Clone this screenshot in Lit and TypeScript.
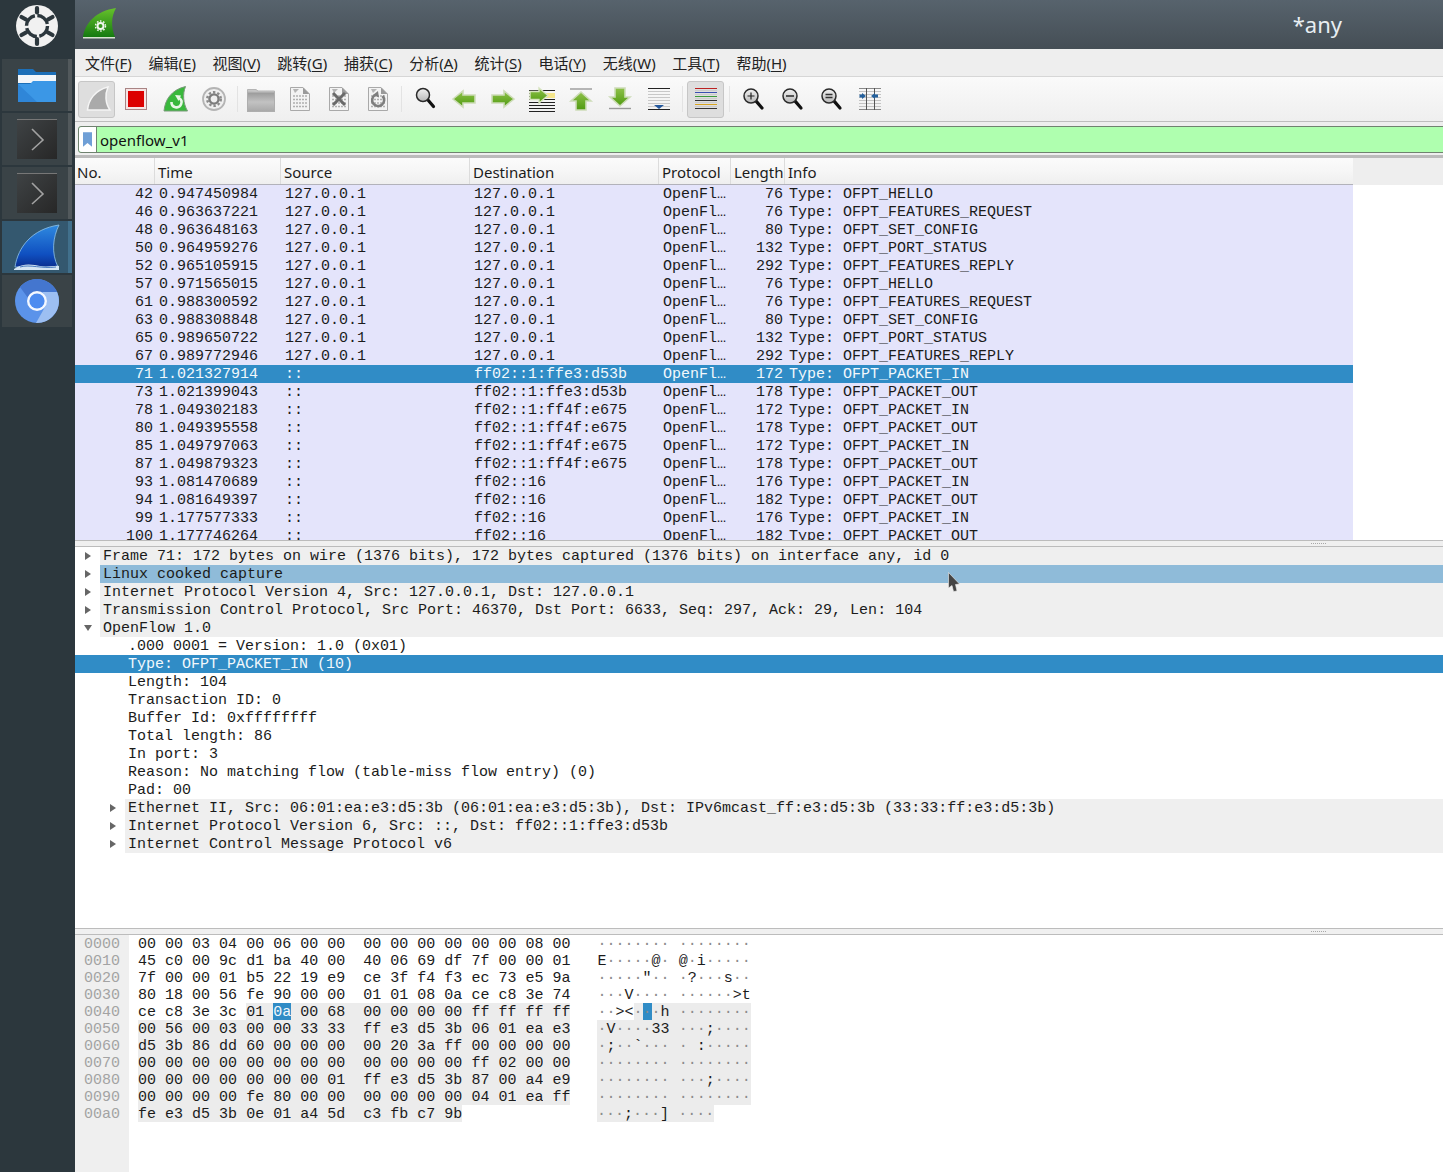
import { LitElement, html, svg, css } from "lit";
import { customElement } from "lit/decorators.js";

// --- data ---

const menus = [
  ["文件(", "F", ")"], ["编辑(", "E", ")"], ["视图(", "V", ")"], ["跳转(", "G", ")"],
  ["捕获(", "C", ")"], ["分析(", "A", ")"], ["统计(", "S", ")"], ["电话(", "Y", ")"],
  ["无线(", "W", ")"], ["工具(", "T", ")"], ["帮助(", "H", ")"],
];

const columns = ["No.", "Time", "Source", "Destination", "Protocol", "Length", "Info"];

const packets = [
  [42, "0.947450984", "127.0.0.1", "127.0.0.1", 76, "OFPT_HELLO"],
  [46, "0.963637221", "127.0.0.1", "127.0.0.1", 76, "OFPT_FEATURES_REQUEST"],
  [48, "0.963648163", "127.0.0.1", "127.0.0.1", 80, "OFPT_SET_CONFIG"],
  [50, "0.964959276", "127.0.0.1", "127.0.0.1", 132, "OFPT_PORT_STATUS"],
  [52, "0.965105915", "127.0.0.1", "127.0.0.1", 292, "OFPT_FEATURES_REPLY"],
  [57, "0.971565015", "127.0.0.1", "127.0.0.1", 76, "OFPT_HELLO"],
  [61, "0.988300592", "127.0.0.1", "127.0.0.1", 76, "OFPT_FEATURES_REQUEST"],
  [63, "0.988308848", "127.0.0.1", "127.0.0.1", 80, "OFPT_SET_CONFIG"],
  [65, "0.989650722", "127.0.0.1", "127.0.0.1", 132, "OFPT_PORT_STATUS"],
  [67, "0.989772946", "127.0.0.1", "127.0.0.1", 292, "OFPT_FEATURES_REPLY"],
  [71, "1.021327914", "::", "ff02::1:ffe3:d53b", 172, "OFPT_PACKET_IN"],
  [73, "1.021399043", "::", "ff02::1:ffe3:d53b", 178, "OFPT_PACKET_OUT"],
  [78, "1.049302183", "::", "ff02::1:ff4f:e675", 172, "OFPT_PACKET_IN"],
  [80, "1.049395558", "::", "ff02::1:ff4f:e675", 178, "OFPT_PACKET_OUT"],
  [85, "1.049797063", "::", "ff02::1:ff4f:e675", 172, "OFPT_PACKET_IN"],
  [87, "1.049879323", "::", "ff02::1:ff4f:e675", 178, "OFPT_PACKET_OUT"],
  [93, "1.081470689", "::", "ff02::16", 176, "OFPT_PACKET_IN"],
  [94, "1.081649397", "::", "ff02::16", 182, "OFPT_PACKET_OUT"],
  [99, "1.177577333", "::", "ff02::16", 176, "OFPT_PACKET_IN"],
  [100, "1.177746264", "::", "ff02::16", 182, "OFPT_PACKET_OUT"],
];

// level, expander (""/"r"/"d"), state, text
const tree: [number, string, string, string][] = [
  [0, "r", "", "Frame 71: 172 bytes on wire (1376 bits), 172 bytes captured (1376 bits) on interface any, id 0"],
  [0, "r", "related", "Linux cooked capture"],
  [0, "r", "", "Internet Protocol Version 4, Src: 127.0.0.1, Dst: 127.0.0.1"],
  [0, "r", "", "Transmission Control Protocol, Src Port: 46370, Dst Port: 6633, Seq: 297, Ack: 29, Len: 104"],
  [0, "d", "", "OpenFlow 1.0"],
  [1, "", "", ".000 0001 = Version: 1.0 (0x01)"],
  [1, "", "selected", "Type: OFPT_PACKET_IN (10)"],
  [1, "", "", "Length: 104"],
  [1, "", "", "Transaction ID: 0"],
  [1, "", "", "Buffer Id: 0xffffffff"],
  [1, "", "", "Total length: 86"],
  [1, "", "", "In port: 3"],
  [1, "", "", "Reason: No matching flow (table-miss flow entry) (0)"],
  [1, "", "", "Pad: 00"],
  [1, "r", "", "Ethernet II, Src: 06:01:ea:e3:d5:3b (06:01:ea:e3:d5:3b), Dst: IPv6mcast_ff:e3:d5:3b (33:33:ff:e3:d5:3b)"],
  [1, "r", "", "Internet Protocol Version 6, Src: ::, Dst: ff02::1:ffe3:d53b"],
  [1, "r", "", "Internet Control Message Protocol v6"],
];

const dump = [
  "00 00 03 04 00 06 00 00 00 00 00 00 00 00 08 00",
  "45 c0 00 9c d1 ba 40 00 40 06 69 df 7f 00 00 01",
  "7f 00 00 01 b5 22 19 e9 ce 3f f4 f3 ec 73 e5 9a",
  "80 18 00 56 fe 90 00 00 01 01 08 0a ce c8 3e 74",
  "ce c8 3e 3c 01 0a 00 68 00 00 00 00 ff ff ff ff",
  "00 56 00 03 00 00 33 33 ff e3 d5 3b 06 01 ea e3",
  "d5 3b 86 dd 60 00 00 00 00 20 3a ff 00 00 00 00",
  "00 00 00 00 00 00 00 00 00 00 00 00 ff 02 00 00",
  "00 00 00 00 00 00 00 01 ff e3 d5 3b 87 00 a4 e9",
  "00 00 00 00 fe 80 00 00 00 00 00 00 04 01 ea ff",
  "fe e3 d5 3b 0e 01 a4 5d c3 fb c7 9b",
].map((r) => r.split(" "));

const FIELD_START = 0x44;
const SELECTED = 0x45;

// --- icons ---

const ico = (body: unknown) => html`<svg class="ico" viewBox="0 0 32 32" width="32" height="32">${body}</svg>`;

const finPath = "M6.5 27 C7.5 17 14 7 27 4 C24 11 24 20 29 27 Z";

const lens = (inner: unknown, x = 14, y = 13, r = 7) => html`
  <svg class="ico" viewBox="0 0 32 32" width="32" height="32">
    <defs><linearGradient id="lg" x1="0" y1="0" x2="0" y2="1"><stop offset="0" stop-color="#f2f2f2" /><stop offset="1" stop-color="#b8b8b8" /></linearGradient></defs>
    <line x1=${x + r * 0.7} y1=${y + r * 0.7} x2=${x + r + 4} y2=${y + r + 5} stroke="#111" stroke-width="3.2" stroke-linecap="round" />
    <circle cx=${x} cy=${y} r=${r} fill="url(#lg)" stroke="#2a2a2a" stroke-width="1.5" />
    ${inner}
  </svg>`;

const docBody = svg`
  <path d="M6.5 4.5 H19 L25.5 11 V27.5 H6.5 Z" fill="#f3f3f3" stroke="#a9a9a9" />
  <path d="M19 4.5 V11 H25.5 Z" fill="#9a9a9a" />
  <path d="M9 6 L15 6 L11 10 Z" fill="#b5b5b5" />
  <g stroke="#b0b0b0" stroke-width="1.4" stroke-dasharray="2 1">
    <line x1="9" y1="13" x2="23" y2="13" /><line x1="9" y1="16.5" x2="23" y2="16.5" />
    <line x1="9" y1="20" x2="23" y2="20" /><line x1="9" y1="23.5" x2="23" y2="23.5" />
  </g>`;

const leftArrow = "M5 16 L15 8 V12 H27 V20 H15 V24 Z";
const rightArrow = "M27 16 L17 8 V12 H5 V20 H17 V24 Z";
const upArrow = "M16 9 L26 18 H21 V27 H11 V18 H6 Z";
const greenFill = svg`<defs><linearGradient id="ag" x1="0" y1="0" x2="0" y2="1"><stop offset="0" stop-color="#8fc24a" /><stop offset="1" stop-color="#4f9a10" /></linearGradient></defs>`;

const rules = (ys: number[], color: string, x1 = 3, x2 = 29) =>
  ys.map((y) => svg`<line x1=${x1} y1=${y} x2=${x2} y2=${y} stroke=${color} stroke-width="1" />`);

const icons = {
  start: ico(svg`<path d=${finPath} fill="#aaa" stroke="#f5f5f5" stroke-width="1.5" />`),
  stop: ico(svg`<rect x="5.5" y="5.5" width="21" height="21" fill="#f6e4e4" stroke="#a98484" /><rect x="8" y="8" width="16" height="16" fill="#dc0000" />`),
  restart: ico(svg`
    <path d="M5 28 C6 17 12 7 26.5 3.5 C23.5 11 24 20 28.5 28 Z" fill="#39b83c" stroke="#7a9a7a" stroke-width="1" />
    <path d="M12.5 19 A5 5 0 1 0 20 15" fill="none" stroke="#e9f7e6" stroke-width="2.6" />
    <path d="M16 12 L22 12.5 L19.5 18 Z" fill="#e9f7e6" />`),
  options: ico(svg`
    <circle cx="16" cy="16" r="11" fill="#efefef" stroke="#b4b4b4" stroke-width="1.8" />
    <circle cx="16" cy="16" r="6.8" fill="none" stroke="#8a8a8a" stroke-width="2.4" stroke-dasharray="2.4 2" />
    <circle cx="16" cy="16" r="4.6" fill="none" stroke="#7c7c7c" stroke-width="2.4" />`),
  open: ico(svg`
    <defs><linearGradient id="fg" x1="0" y1="0" x2="0" y2="1"><stop offset="0" stop-color="#9a9a9a" /><stop offset=".5" stop-color="#c2c2c2" /><stop offset="1" stop-color="#a8a8a8" /></linearGradient></defs>
    <path d="M2.5 9 V6.5 H11 L13 8 H29.5 V10 Z" fill="#c6c6c6" stroke="#b4b4b4" />
    <rect x="2.5" y="9.5" width="27" height="19" fill="url(#fg)" stroke="#aeaeae" />`),
  save: ico(docBody),
  close: ico(svg`${docBody}<path d="M10 10 L22 22 M22 10 L10 22" stroke="#6a6a6a" stroke-width="3" />`),
  reload: ico(svg`${docBody}<path d="M13 12 A6 6 0 1 0 20.5 13" fill="none" stroke="#7e7e7e" stroke-width="2.6" /><path d="M16 8 L11 12 L17 14.5 Z" fill="#7e7e7e" />`),
  find: lens("", 14, 12, 6.5),
  prev: ico(svg`${greenFill}<path d=${leftArrow} fill="url(#ag)" stroke="#cddcb8" stroke-width="1.6" />`),
  next: ico(svg`${greenFill}<path d=${rightArrow} fill="url(#ag)" stroke="#cddcb8" stroke-width="1.6" />`),
  go: ico(svg`${greenFill}
    ${rules([7.5, 10.5, 13.5, 16.5, 19.5, 22.5, 25.5, 28.5], "#222")}
    <rect x="20" y="10" width="9" height="5" fill="#f5e68c" />
    <path d="M22 12.5 L13 5 V8.5 H4 V16.5 H13 V20 Z" fill="url(#ag)" stroke="#d7e4c0" stroke-width="1.4" />`),
  first: ico(svg`${greenFill}
    <line x1="5" y1="6" x2="27" y2="6" stroke="#999" stroke-width="1.4" />
    <path d=${upArrow} fill="url(#ag)" stroke="#cddcb8" stroke-width="1.6" />`),
  last: ico(svg`${greenFill}
    <line x1="5" y1="25.5" x2="27" y2="25.5" stroke="#999" stroke-width="1.4" />
    <path d="M16 23 L26 14 H21 V5 H11 V14 H6 Z" fill="url(#ag)" stroke="#cddcb8" stroke-width="1.6" />`),
  autoscroll: ico(svg`
    ${rules([8.5, 11.5, 14.5, 17.5, 20.5, 23.5], "#c8c8c8", 5, 27)}
    ${rules([5.5, 26.5], "#222", 5, 27)}
    <path d="M11 22 H21 L16 26 Z" fill="#24589c" />`),
  colorize: ico(svg`
    ${rules([7.5, 11.5, 15.5, 19.5, 23.5], "#ccc", 5, 27)}
    ${rules([5.5], "#b22", 5, 27)}${rules([9.5], "#3a50b0", 5, 27)}${rules([13.5], "#3c9a3c", 5, 27)}
    ${rules([17.5], "#333", 5, 27)}${rules([21.5], "#d9a520", 5, 27)}${rules([25.5], "#333", 5, 27)}`),
  zoomIn: lens(svg`<path d="M10.5 13 H17.5 M14 9.5 V16.5" stroke="#222" stroke-width="1.2" />`),
  zoomOut: lens(svg`<path d="M10 13 H18" stroke="#333" stroke-width="1.6" />`),
  zoomReset: lens(svg`<path d="M10.5 11.5 H17.5 M10.5 14.5 H17.5" stroke="#333" stroke-width="1.4" />`),
  resize: ico(svg`
    ${rules([8.5, 11.5, 14.5, 17.5, 20.5, 23.5], "#c4c4c4", 5, 27)}
    ${rules([5.5, 26.5], "#888", 5, 27)}
    <path d="M12.5 5 V27 M20.5 5 V27" stroke="#555" />
    <path d="M8 10 L12 13 L8 16 Z M17 13 L21 10 V16 Z" fill="#24609c" />
    <rect x="5.5" y="11.5" width="3" height="3" fill="#24609c" /><rect x="21" y="11.5" width="3" height="3" fill="#24609c" />`),
};

const toolbar: (string | null)[] = [
  "start", "stop", "restart", "options", null, "open", "save", "close", "reload", null,
  "find", "prev", "next", "go", "first", "last", "autoscroll", null, "colorize", null,
  "zoomIn", "zoomOut", "zoomReset", "resize",
];
const pressed = new Set(["start", "colorize"]);

@customElement("app-root")
export class AppRoot extends LitElement {
  // --- render parts ---

  renderDock() {
    return html`
      <aside class="dock">
        <div class="launcher">
          <svg viewBox="0 0 44 44" width="44" height="44">
            <circle cx="22" cy="22" r="21" fill="#f1f1f1" />
            <circle cx="22" cy="22" r="10.5" fill="none" stroke="#2c373d" stroke-width="3.4" stroke-dasharray="14 2.5" />
            <g stroke="#2c373d" stroke-width="4.2" stroke-linecap="round">
              <line x1="22" y1="4" x2="22" y2="8.5" /><line x1="22" y1="35" x2="22" y2="40" />
              <line x1="6.5" y1="13" x2="11" y2="15.5" /><line x1="37.5" y1="13" x2="33" y2="15.5" />
              <line x1="6.5" y1="31" x2="11" y2="28.5" /><line x1="37.5" y1="31" x2="33" y2="28.5" />
            </g>
          </svg>
        </div>
        <div class="tile">
          <svg viewBox="0 0 44 40" width="44" height="40">
            <path d="M3 4 H18 L21 7 H41 V36 H3 Z" fill="#1c6fb8" />
            <rect x="3" y="10" width="38" height="8" fill="#f2f6fa" />
            <path d="M3 19 H15 L18 16 H41 V37 H3 Z" fill="#3b97e6" />
            <path d="M3 19 L22 37 H3 Z" fill="#2f86d8" />
          </svg>
        </div>
        <div class="tile">${this.renderTerminal()}</div>
        <div class="tile">${this.renderTerminal()}</div>
        <div class="tile active">
          <svg viewBox="0 0 50 48" width="50" height="48">
            <defs><linearGradient id="df" x1="0" y1="0" x2="0" y2="1"><stop offset="0" stop-color="#2f8ae0" /><stop offset=".7" stop-color="#0f4fc0" /><stop offset="1" stop-color="#0a2e90" /></linearGradient></defs>
            <path d="M3 44 C6 24 20 6 47 2 C41 14 39 30 46 44 Z" fill="url(#df)" stroke="#8fc4ea" stroke-width=".8" />
            <path d="M2 46 C12 39 22 42 28 43 C36 45 42 42 47 43 L47 47 H2 Z" fill="#d4e4f2" />
            <path d="M8 44 C18 41 30 46 44 44" fill="none" stroke="#4a7cc0" stroke-width="1" />
          </svg>
        </div>
        <div class="tile plain">
          <svg viewBox="0 0 46 46" width="46" height="46">
            <circle cx="23" cy="23" r="22" fill="#5b93ea" />
            <path d="M6 9 A22 22 0 0 1 43 14 L23 14 C18 14 15 17 14 20 Z" fill="#4476cf" />
            <path d="M43 14 A22 22 0 0 1 22 45 L31 29 C34 23 32 17 28 14 Z" fill="#9dbff2" />
            <circle cx="23" cy="23" r="10" fill="#f4f8ff" />
            <circle cx="23" cy="23" r="7.6" fill="#4c8bf0" />
          </svg>
        </div>
      </aside>
    `;
  }

  renderTerminal() {
    return html`
      <svg viewBox="0 0 40 40" width="40" height="40">
        <defs><linearGradient id="tg" x1="0" y1="0" x2="1" y2="1"><stop offset="0" stop-color="#3f4345" /><stop offset="1" stop-color="#272727" /></linearGradient></defs>
        <rect x="0" y="0" width="40" height="40" fill="url(#tg)" />
        <rect x="0" y="0" width="40" height="1" fill="#777" />
        <polyline points="15,10 26,21 15,31" fill="none" stroke="#a2a2a2" stroke-width="1.6" />
      </svg>
    `;
  }

  renderTitle() {
    return html`
      <header class="titlebar">
        <svg class="app-icon" viewBox="0 0 36 32" width="36" height="32">
          <defs><linearGradient id="ai" x1="0" y1="0" x2="0" y2="1"><stop offset="0" stop-color="#67c22c" /><stop offset="1" stop-color="#157a10" /></linearGradient></defs>
          <path d="M1 30 C3 16 14 4 34 1 C29 10 29 20 33 30 Z" fill="url(#ai)" />
          <path d="M1 30 H33 V31.5 H1 Z" fill="#d8e6d0" />
          <circle cx="18.5" cy="19" r="3" fill="none" stroke="#f1f6ee" stroke-width="2" />
          <circle cx="18.5" cy="19" r="5" fill="none" stroke="#f1f6ee" stroke-width="1.4" stroke-dasharray="1.6 1.6" />
        </svg>
        <span class="title">*any</span>
      </header>
    `;
  }

  renderPacketList() {
    return html`
      <div class="plist-head">
        <div class="head-row">${columns.map((c) => html`<div class="head-cell">${c}</div>`)}</div>
      </div>
      <div class="plist">
        ${packets.map((p) => html`
          <div class="pkt ${p[0] === 71 ? "selected" : ""}">
            <span class="num">${p[0]}</span>
            <span class="cell">${p[1]}</span>
            <span class="cell">${p[2]}</span>
            <span class="cell">${p[3]}</span>
            <span class="cell">OpenFl…</span>
            <span class="num len">${p[4]}</span>
            <span class="cell">Type: ${p[5]}</span>
          </div>
        `)}
      </div>
    `;
  }

  renderTree() {
    return html`
      <div class="tree">
        ${tree.map(([level, exp, state, text]) => html`
          <div class="node lv${level} ${exp ? "branch" : ""} ${state}">
            <span class="exp">
              ${exp === "r" ? html`<i class="tri-r"></i>` : exp === "d" ? html`<i class="tri-d"></i>` : ""}
            </span>
            <span class="label">${text}</span>
          </div>
        `)}
      </div>
    `;
  }

  renderHex() {
    const kind = (i: number) => (i === SELECTED ? "sel" : i >= FIELD_START ? "hl" : "");
    const sepKind = (i: number) => (i >= FIELD_START ? "hl" : "");
    return html`
      <div class="hex">
        <div class="offsets">
          ${dump.map((_, r) => html`<div>${(r * 16).toString(16).padStart(4, "0")}</div>`)}
        </div>
        <div class="dump">
          ${dump.map((row, r) => html`
            <div class="line">
              <span class="bytes">${row.map((b, c) => {
                const i = r * 16 + c;
                const sep = c === row.length - 1 ? "" : c === 7 ? "  " : " ";
                return html`<span class=${kind(i)}>${b}</span><span class=${sepKind(i)}>${sep}</span>`;
              })}</span>
              <span class="ascii">${row.map((b, c) => {
                const i = r * 16 + c;
                const v = parseInt(b, 16);
                const printable = v >= 32 && v < 127;
                const ch = printable ? String.fromCharCode(v) : "·";
                const gap = c === 7 ? html`<span class=${sepKind(i)}> </span>` : "";
                return html`<span class="${kind(i)} ${printable ? "" : "dot"}">${ch}</span>${gap}`;
              })}</span>
            </div>
          `)}
        </div>
      </div>
    `;
  }

  render() {
    return html`
      ${this.renderDock()}
      <main class="win">
        ${this.renderTitle()}
        <nav class="menubar">
          ${menus.map(([a, k, z]) => html`<span>${a}<u>${k}</u>${z}</span>`)}
        </nav>
        <div class="toolbar">
          ${toolbar.map((t) =>
            t === null
              ? html`<span class="sep"></span>`
              : html`<span class="btn ${pressed.has(t) ? "on" : ""}">${icons[t as keyof typeof icons]}</span>`
          )}
        </div>
        <div class="filter-wrap">
          <div class="filter">
            <span class="bm">
              <svg viewBox="0 0 10 16" width="9" height="15"><path d="M0 0 H10 V16 L5 12 L0 16 Z" fill="#6f9fd6" /></svg>
            </span>
            <span class="filter-text">openflow_v1</span>
          </div>
        </div>
        ${this.renderPacketList()}
        <div class="splitter"><span class="grip"></span></div>
        ${this.renderTree()}
        <div class="splitter"><span class="grip"></span></div>
        ${this.renderHex()}
        <svg class="cursor" viewBox="0 0 12 20" width="12" height="20">
          <path d="M0.5 0.5 L11.5 12 L7.5 12.5 L9 19 L5.5 19.5 L4 13.5 L0.5 16 Z" fill="#444" stroke="#eee" stroke-width=".6" />
        </svg>
      </main>
    `;
  }

  // --- styles ---

  static styles = css`
    :host {
      display: flex;
      width: 1443px;
      height: 1172px;
      overflow: hidden;
      background: #fff;
      color: #1b1b1b;
      font: 15px "Noto Sans", "Noto Sans CJK SC", sans-serif;
    }

    .dock {
      flex: 0 0 75px;
      display: flex;
      flex-direction: column;
      gap: 2px;
      padding: 0 3px 0 2px;
      box-sizing: border-box;
      background: #2c373d;
    }
    .launcher {
      height: 57px;
      display: flex;
      align-items: flex-start;
      justify-content: center;
      padding-top: 4px;
      box-sizing: border-box;
    }
    .tile {
      height: 52px;
      display: flex;
      align-items: center;
      justify-content: center;
      box-sizing: border-box;
      background: #3a4347;
      border-right: 4px solid #52595c;
      padding-left: 3px;
    }
    .tile.active { background: #34586f; border-right-color: #41708c; }
    .tile.plain { border-right-color: #3a4347; }

    .win {
      position: relative;
      flex: 1;
      min-width: 0;
      display: flex;
      flex-direction: column;
    }

    .titlebar {
      flex: 0 0 49px;
      display: flex;
      align-items: center;
      justify-content: space-between;
      padding: 0 101px 0 7px;
      box-sizing: border-box;
      background: linear-gradient(#57636d, #454e55);
    }
    .app-icon { margin-top: -4px; }
    .title { color: #e8eef2; font-size: 22px; margin-top: -2px; }

    .menubar {
      flex: 0 0 27px;
      display: flex;
      align-items: center;
      gap: 16.7px;
      padding-left: 10px;
      background: #eeeeee;
      color: #222;
      font-size: 15px;
      white-space: nowrap;
    }
    .menubar u { text-underline-offset: 2px; }

    .toolbar {
      flex: 0 0 46px;
      display: flex;
      align-items: center;
      padding-left: 2px;
      box-sizing: border-box;
      border-top: 1px solid #d6d6d6;
      border-bottom: 1px solid #bdbdbd;
      background: linear-gradient(#fafafa, #efefef);
    }
    .btn {
      flex: 0 0 39px;
      height: 37px;
      display: flex;
      align-items: center;
      justify-content: center;
      box-sizing: border-box;
    }
    .btn.on {
      background: #dedede;
      border: 1px solid #c6c6c6;
      border-radius: 3px;
      margin: 0 1px;
      flex-basis: 37px;
    }
    .sep {
      flex: 0 0 8px;
      height: 26px;
      background: linear-gradient(#e3e3e3, #e3e3e3) center / 1px 100% no-repeat;
    }

    .filter-wrap {
      flex: 0 0 33px;
      padding: 4px 0 2px 3px;
      box-sizing: border-box;
      background: #eeeeee;
    }
    .filter {
      height: 27px;
      display: flex;
      align-items: stretch;
      box-sizing: border-box;
      margin-right: -4px;
      border: 1px solid #6f826f;
      border-radius: 3px 0 0 3px;
      background: #afffaf;
    }
    .bm {
      flex: 0 0 17px;
      display: flex;
      align-items: center;
      justify-content: center;
      background: #fff;
      border-right: 1px solid #6f826f;
      border-radius: 3px 0 0 3px;
    }
    .filter-text { align-self: center; padding-left: 3px; color: #111; }

    .plist-head {
      flex: 0 0 30px;
      box-sizing: border-box;
      border-top: 3px solid #bbbbbb;
      background: #eeeeee;
    }
    .head-row {
      width: 1278px;
      height: 27px;
      box-sizing: border-box;
      display: grid;
      grid-template-columns: 80px 126px 189px 189px 72px 54px 568px;
      border-bottom: 1px solid #b2b2ba;
      background: linear-gradient(#fbfbfb 0, #f6f6f6 50%, #efefef 100%);
    }
    .head-cell {
      display: flex;
      align-items: center;
      padding: 2px 0 0 3px;
      border-right: 1px solid #dcdcdc;
      box-sizing: border-box;
      line-height: 1;
    }
    .head-cell:first-child { padding-left: 2px; }
    .head-cell:last-child { border-right: none; }

    .plist {
      flex: 0 0 355px;
      overflow: hidden;
      font: 15px/20px "Liberation Mono", monospace;
    }
    .pkt {
      width: 1278px;
      height: 18px;
      display: grid;
      grid-template-columns: 80px 126px 189px 189px 72px 54px 568px;
      grid-template-rows: 18px;
      background: #e4e4fb;
    }
    .pkt.selected { background: #308cc6; color: #f2f8fc; }
    .num { text-align: right; padding-right: 2px; white-space: pre; }
    .cell { padding-left: 4px; white-space: pre; }

    .splitter {
      flex: 0 0 7px;
      position: relative;
      box-sizing: border-box;
      border-top: 1px solid #bcbcbc;
      border-bottom: 1px solid #bcbcbc;
      background: #f0f0f0;
    }
    .grip {
      position: absolute;
      left: 1236px;
      top: 2px;
      width: 15px;
      border-top: 1px dotted #a8a8a8;
    }

    .tree {
      flex: 0 0 381px;
      overflow: hidden;
      font: 15px/20px "Liberation Mono", monospace;
    }
    .node {
      height: 18px;
      display: flex;
    }
    .exp {
      flex: 0 0 25px;
      display: flex;
      align-items: center;
      justify-content: center;
      box-sizing: border-box;
    }
    .lv1 .exp { flex-basis: 50px; padding-left: 25px; }
    .label { flex: 1; padding-left: 3px; white-space: pre; }
    .branch .label { background: #efefef; }
    .related .label { background: #8fbbd9; }
    .node.selected { background: #308cc6; color: #f2f8fc; }
    .tri-r {
      width: 0;
      height: 0;
      border-left: 6px solid #666;
      border-top: 4.5px solid transparent;
      border-bottom: 4.5px solid transparent;
    }
    .tri-d {
      width: 0;
      height: 0;
      border-top: 6px solid #666;
      border-left: 4.5px solid transparent;
      border-right: 4.5px solid transparent;
    }

    .hex {
      flex: 1;
      display: flex;
      font: 15px/19px "Liberation Mono", monospace;
    }
    .offsets {
      flex: 0 0 54px;
      box-sizing: border-box;
      padding-left: 9px;
      background: #efefef;
      color: #a3a3a3;
    }
    .offsets div { height: 17px; }
    .dump { padding-left: 9px; }
    .line { display: flex; height: 17px; }
    .bytes { flex: 0 0 432px; margin-right: 27px; display: flex; }
    .ascii { flex: 0 0 153px; display: flex; }
    .bytes span, .ascii span { height: 17px; white-space: pre; }
    .hl { background: #ececec; }
    .sel { background: #308cc6; color: #f2f8fc; }
    .dot { color: #8c8c8c; }

    .cursor { position: absolute; left: 873px; top: 572px; }
  `;
}
